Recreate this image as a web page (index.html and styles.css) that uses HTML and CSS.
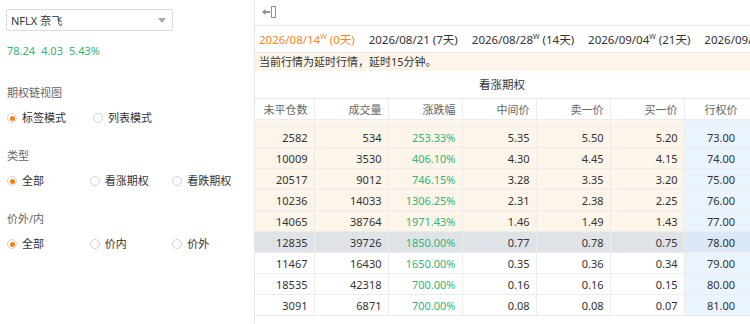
FILE: index.html
```html
<!DOCTYPE html>
<html lang="zh-CN">
<head>
  <meta charset="UTF-8">
  <title>期权链</title>
  <link rel="stylesheet" href="styles.css">
</head>
<body>

  <aside class="sidebar">
    <div class="select-box">
      <span>NFLX 奈飞</span>
      <span class="caret"></span>
    </div>

    <div class="stats">
      <span>78.24</span><span>4.03</span><span>5.43%</span>
    </div>

    <div class="group first">
      <div class="group-label">期权链视图</div>
      <div class="radio-row">
        <label class="radio checked"><i></i>标签模式</label>
        <label class="radio"><i></i>列表模式</label>
      </div>
    </div>

    <div class="group">
      <div class="group-label">类型</div>
      <div class="radio-row">
        <label class="radio checked"><i></i>全部</label>
        <label class="radio"><i></i>看涨期权</label>
        <label class="radio"><i></i>看跌期权</label>
      </div>
    </div>

    <div class="group">
      <div class="group-label">价外/内</div>
      <div class="radio-row">
        <label class="radio checked"><i></i>全部</label>
        <label class="radio"><i></i>价内</label>
        <label class="radio"><i></i>价外</label>
      </div>
    </div>
  </aside>

  <main class="content">
    <div class="toolbar">
      <svg class="collapse-icon" width="15" height="12" viewBox="0 0 15 12">
        <path d="M1 6 L4.5 3 L4.5 9 Z" fill="#8a8f99"/>
        <rect x="4" y="5" width="5" height="2" fill="#8a8f99"/>
        <rect x="10.5" y="0.5" width="4" height="11" fill="none" stroke="#8a8f99" stroke-width="1"/>
      </svg>
    </div>

    <div class="tabs">
      <span class="tab active">2026/08/14<sup>W</sup> (0天)</span>
      <span class="tab">2026/08/21 (7天)</span>
      <span class="tab">2026/08/28<sup>W</sup> (14天)</span>
      <span class="tab">2026/09/04<sup>W</sup> (21天)</span>
      <span class="tab">2026/09/11<sup>W</sup> (28天)</span>
    </div>

    <div class="notice">当前行情为延时行情，延时15分钟。</div>

    <div class="side-title">看涨期权</div>

    <table class="chain">
      <colgroup>
        <col class="c-first">
        <col class="c"><col class="c"><col class="c"><col class="c"><col class="c"><col class="c">
      </colgroup>
      <thead>
        <tr>
          <th>未平仓数</th><th>成交量</th><th>涨跌幅</th><th>中间价</th><th>卖一价</th><th>买一价</th><th class="strike">行权价</th>
        </tr>
      </thead>
      <tbody>
        <tr class="spacer itm"><td></td><td></td><td></td><td></td><td></td><td></td><td class="strike"></td></tr>
        <tr class="itm"><td>2582</td><td>534</td><td class="up">253.33%</td><td>5.35</td><td>5.50</td><td>5.20</td><td class="strike">73.00</td></tr>
        <tr class="itm"><td>10009</td><td>3530</td><td class="up">406.10%</td><td>4.30</td><td>4.45</td><td>4.15</td><td class="strike">74.00</td></tr>
        <tr class="itm"><td>20517</td><td>9012</td><td class="up">746.15%</td><td>3.28</td><td>3.35</td><td>3.20</td><td class="strike">75.00</td></tr>
        <tr class="itm"><td>10236</td><td>14033</td><td class="up">1306.25%</td><td>2.31</td><td>2.38</td><td>2.25</td><td class="strike">76.00</td></tr>
        <tr class="itm"><td>14065</td><td>38764</td><td class="up">1971.43%</td><td>1.46</td><td>1.49</td><td>1.43</td><td class="strike">77.00</td></tr>
        <tr class="current"><td>12835</td><td>39726</td><td class="up">1850.00%</td><td>0.77</td><td>0.78</td><td>0.75</td><td class="strike">78.00</td></tr>
        <tr><td>11467</td><td>16430</td><td class="up">1650.00%</td><td>0.35</td><td>0.36</td><td>0.34</td><td class="strike">79.00</td></tr>
        <tr><td>18535</td><td>42318</td><td class="up">700.00%</td><td>0.16</td><td>0.16</td><td>0.15</td><td class="strike">80.00</td></tr>
        <tr><td>3091</td><td>6871</td><td class="up">700.00%</td><td>0.08</td><td>0.08</td><td>0.07</td><td class="strike">81.00</td></tr>
      </tbody>
    </table>
  </main>

</body>
</html>
```

FILE: styles.css
```css
* {
  margin: 0;
  padding: 0;
  box-sizing: border-box;
}

body {
  font-family: "Noto Sans", "Noto Sans CJK SC", sans-serif;
  font-size: 11px;
  color: #333;
  background: #fff;
  display: flex;
  height: 324px;
  overflow: hidden;
}

/* left panel */
.sidebar {
  width: 255px;
  flex: none;
  border-right: 1px solid #e6e6e6;
  padding: 9px 0 0 6px;
}

.select-box {
  width: 167px;
  height: 22px;
  border: 1px solid #dcdcdc;
  border-radius: 2px;
  display: flex;
  align-items: center;
  justify-content: space-between;
  padding: 0 6px 0 4px;
  font-size: 11px;
  color: #333;
}

.caret {
  width: 0;
  height: 0;
  border-left: 4px solid transparent;
  border-right: 4px solid transparent;
  border-top: 5px solid #a3a8b0;
}

.stats {
  margin-top: 12px;
  line-height: 16px;
  color: #2fb67a;
  padding-left: 1px;
}

.stats span {
  margin-right: 6px;
}

.group {
  margin-top: 22px;
}

.group.first {
  margin-top: 26px;
}

.group-label {
  line-height: 16px;
  color: #666;
  padding-left: 1px;
}

.radio-row {
  margin-top: 9px;
  display: flex;
  line-height: 16px;
}

.radio {
  width: 86px;
  display: flex;
  align-items: center;
  gap: 5px;
  padding-left: 1px;
}

.radio i {
  width: 10px;
  height: 10px;
  border-radius: 50%;
  border: 1px solid #d2d2d2;
  display: flex;
  align-items: center;
  justify-content: center;
}

.radio.checked i::after {
  content: "";
  width: 5px;
  height: 5px;
  border-radius: 50%;
  background: #ff7f0f;
}

/* right panel */
.content {
  flex: 1;
  min-width: 0;
  overflow: hidden;
}

.toolbar {
  height: 26px;
  border-bottom: 1px solid #e6e6e6;
  padding: 6px 0 0 6px;
}

.collapse-icon {
  display: block;
}

.tabs {
  height: 27px;
  border-bottom: 1px solid #e6e6e6;
  display: flex;
  align-items: center;
  gap: 14px;
  padding-left: 4px;
  white-space: nowrap;
  font-size: 11.5px;
}

.tab sup {
  font-size: 7px;
  vertical-align: 5px;
  line-height: 0;
}

.tab.active {
  color: #f7861c;
}

.notice {
  height: 18px;
  line-height: 18px;
  background: #fdf5ea;
  padding-left: 4px;
}

.side-title {
  height: 27px;
  line-height: 27px;
  padding-left: 224px;
  font-size: 11.5px;
}

.chain {
  border-collapse: collapse;
  table-layout: fixed;
  width: 501px;
  border-top: 1px solid #e6e6e6;
}

.c-first {
  width: 59px;
}

.c {
  width: 74px;
}

.chain th,
.chain td {
  height: 21px;
  padding: 0 6px 0 0;
  text-align: right;
  border-bottom: 1px solid #ececec;
  border-right: 1px solid #ececec;
  white-space: nowrap;
}

.chain th {
  font-weight: normal;
  color: #666;
}

.chain th.strike,
.chain td.strike {
  text-align: center;
  padding: 0;
  background: #eaf4fe;
}

.chain th.strike {
  background: #fff;
}

.chain .spacer td {
  height: 7px;
}

.chain .itm td {
  background: #fdf5e9;
}

.chain .itm td.strike {
  background: #eaf4fe;
}

.chain .current td {
  background: #dfe3e7;
}

.chain .current td.strike {
  background: #dbe8f7;
}

.chain td.up {
  color: #2fb67a;
}
```
